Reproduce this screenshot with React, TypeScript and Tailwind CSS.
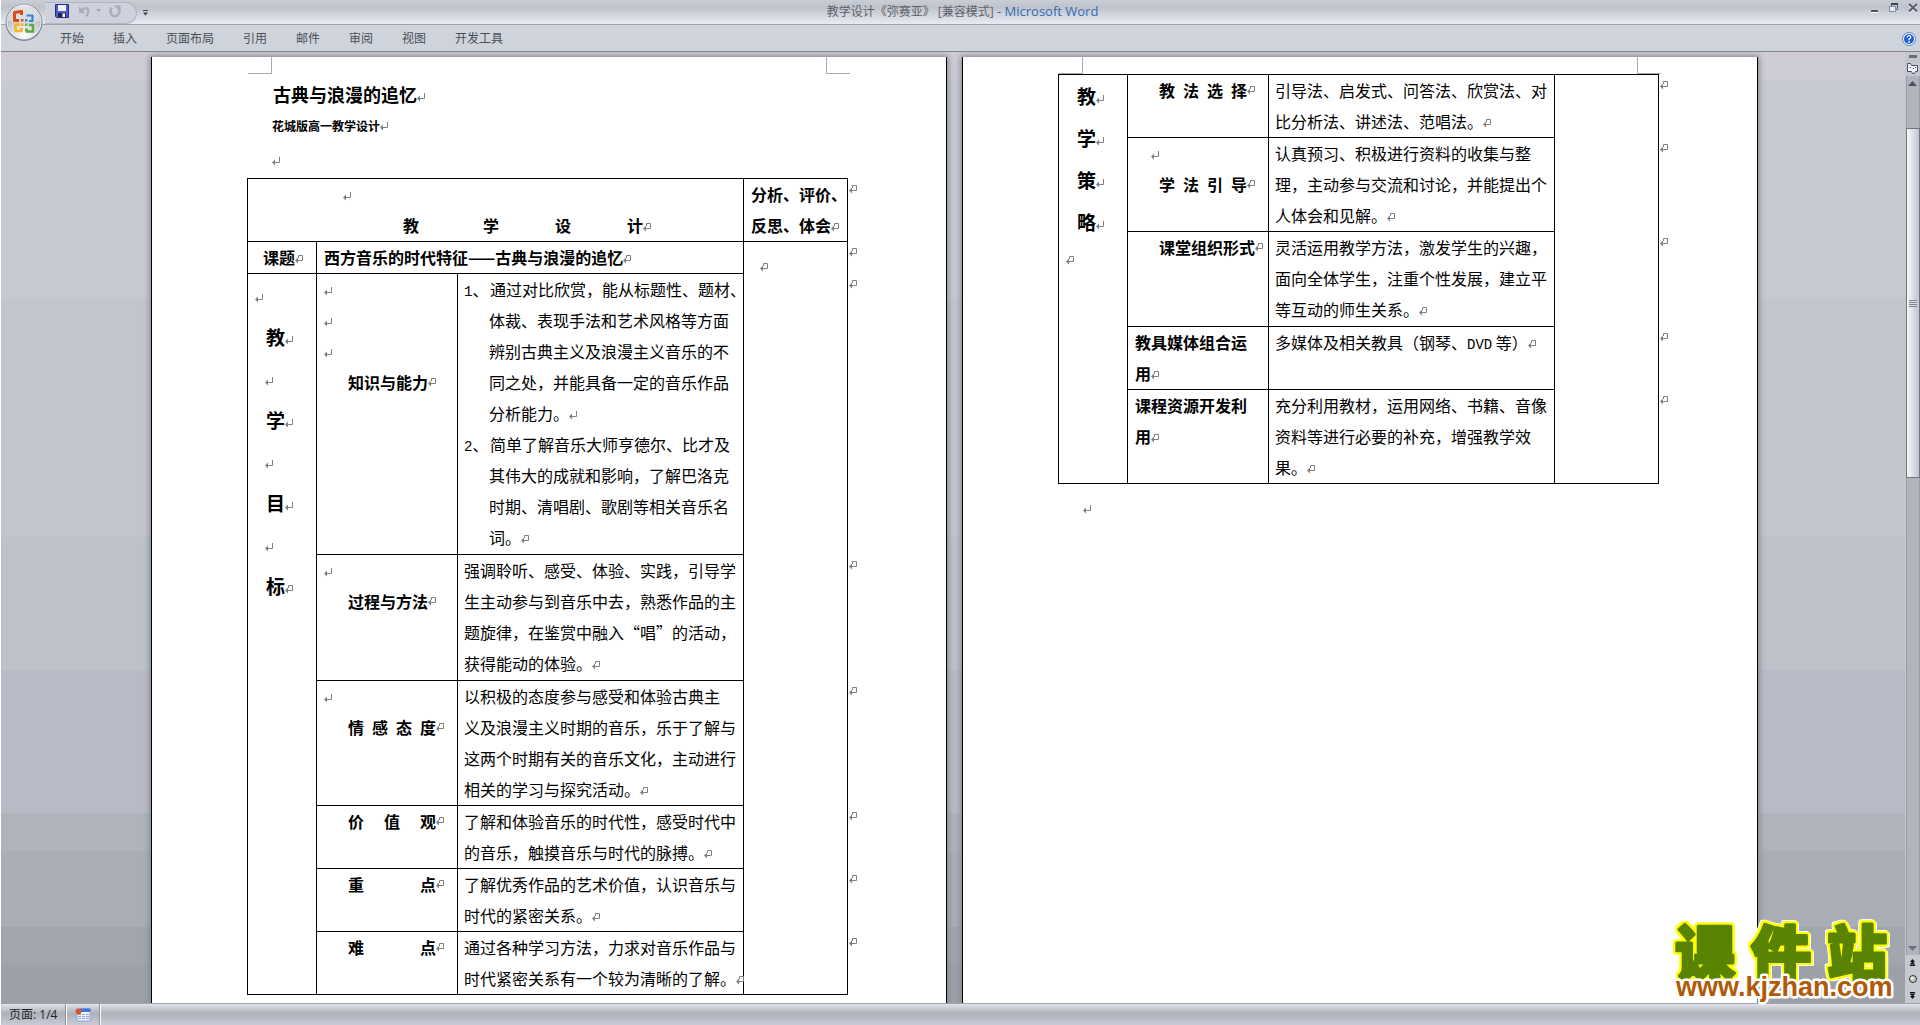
import type { ReactNode } from "react"

const tabs = ["开始", "插入", "页面布局", "引用", "邮件", "审阅", "视图", "开发工具"]

const goals = [
  {
    marks: 3,
    label: ["知识与能力"],
    height: "h-[281px]",
    lines: [
      "1、通过对比欣赏，能从标题性、题材、",
      "体裁、表现手法和艺术风格等方面",
      "辨别古典主义及浪漫主义音乐的不",
      "同之处，并能具备一定的音乐作品",
      "分析能力。",
      "2、简单了解音乐大师亨德尔、比才及",
      "其伟大的成就和影响，了解巴洛克",
      "时期、清唱剧、歌剧等相关音乐名",
      "词。",
    ],
  },
  {
    marks: 1,
    label: ["过程与方法"],
    height: "h-[126px]",
    lines: [
      "强调聆听、感受、体验、实践，引导学",
      "生主动参与到音乐中去，熟悉作品的主",
      "题旋律，在鉴赏中融入“唱”的活动，",
      "获得能动的体验。",
    ],
  },
  {
    marks: 1,
    label: ["情", "感", "态", "度"],
    height: "h-[125px]",
    lines: [
      "以积极的态度参与感受和体验古典主",
      "义及浪漫主义时期的音乐，乐于了解与",
      "这两个时期有关的音乐文化，主动进行",
      "相关的学习与探究活动。",
    ],
  },
  {
    marks: 0,
    label: ["价", "值", "观"],
    height: "h-[63px]",
    lines: ["了解和体验音乐的时代性，感受时代中", "的音乐，触摸音乐与时代的脉搏。"],
  },
  {
    marks: 0,
    label: ["重", "点"],
    height: "h-[63px]",
    lines: ["了解优秀作品的艺术价值，认识音乐与", "时代的紧密关系。"],
  },
  {
    marks: 0,
    label: ["难", "点"],
    height: "h-[63px]",
    lines: ["通过各种学习方法，力求对音乐作品与", "时代紧密关系有一个较为清晰的了解。"],
  },
]

const strategies = [
  {
    marks: 0,
    label: ["教", "法", "选", "择"],
    height: "h-[63px]",
    lines: ["引导法、启发式、问答法、欣赏法、对", "比分析法、讲述法、范唱法。"],
  },
  {
    marks: 1,
    indent: true,
    label: ["学", "法", "引", "导"],
    height: "h-[94px]",
    lines: ["认真预习、积极进行资料的收集与整", "理，主动参与交流和讨论，并能提出个", "人体会和见解。"],
  },
  {
    marks: 0,
    label: ["课堂组织形式"],
    height: "h-[95px]",
    lines: ["灵活运用教学方法，激发学生的兴趣，", "面向全体学生，注重个性发展，建立平", "等互动的师生关系。"],
  },
  {
    marks: 0,
    wrapped: ["教具媒体组合运", "用"],
    height: "h-[63px]",
    lines: ["多媒体及相关教具（钢琴、DVD 等）"],
  },
  {
    marks: 0,
    wrapped: ["课程资源开发利", "用"],
    height: "h-[94px]",
    lines: ["充分利用教材，运用网络、书籍、音像", "资料等进行必要的补充，增强教学效", "果。"],
  },
]

/* Paragraph mark; the cell variant has a small hook at the top */
function Mark({ cell = false }: { cell?: boolean }) {
  return (
    <svg
      className="inline-block h-[9px] w-2 shrink-0 align-baseline"
      viewBox="0 0 8 9"
      fill="none"
      stroke="#808080"
      aria-hidden="true"
    >
      <path d={cell ? "M3.5 3V0.5H7.5V5.5H2" : "M7.5 0V5.5H2"} />
      <path d="M0 5.500L3 2.500V8.500Z" fill="#808080" stroke="none" />
    </svg>
  )
}

function Lines({ lines }: { lines: string[] }) {
  const numbered = lines[0].startsWith("1、")
  return (
    <>
      {lines.map((line, index) => {
        const isItem = /^\d、/.test(line)
        return (
          <div key={index} className={numbered && !isItem ? "pl-[25px]" : ""}>
            {isItem ? (
              <span className="flex">
                <span className="w-[26px] shrink-0">
                  <span className="font-['Liberation_Mono',monospace] text-sm">{line[0]}</span>、
                </span>
                {line.slice(2)}
              </span>
            ) : line.includes("DVD") ? (
              <>
                多媒体及相关教具（钢琴、
                <span className="font-['Liberation_Mono',monospace] text-sm">DVD</span> 等）
              </>
            ) : (
              line
            )}
            {index === lines.length - 1 ? <Mark cell /> : line.endsWith("分析能力。") && <Mark />}
          </div>
        )
      })}
    </>
  )
}

type Row = { marks: number; indent?: boolean; label?: string[]; wrapped?: string[] }

function LabelCell({ row }: { row: Row }) {
  return (
    <th scope="row" className="border border-black px-[7px] text-left align-top font-bold">
      {Array.from({ length: row.marks }, (_, i) => (
        <div key={i} className={row.indent ? "pl-4" : ""}>
          <Mark />
        </div>
      ))}
      {row.wrapped && (
        <>
          <div>{row.wrapped[0]}</div>
          <div>
            {row.wrapped[1]}
            <Mark cell />
          </div>
        </>
      )}
      {row.label && (
        <div className="flex items-center pl-6">
          {row.label.length > 1 ? (
            <span className="flex w-[88px] shrink-0 justify-between">
              {row.label.map((char) => (
                <span key={char}>{char}</span>
              ))}
            </span>
          ) : (
            row.label[0]
          )}
          <Mark cell />
        </div>
      )}
    </th>
  )
}

function RowEnd() {
  return (
    <td className="align-top leading-4">
      <span className="pl-px">
        <Mark cell />
      </span>
    </td>
  )
}

function PlanTable({ children }: { children: ReactNode }) {
  return (
    <table className="ml-[95px] w-[614px] table-fixed border-collapse whitespace-nowrap">
      <colgroup>
        <col className="w-[69px]" />
        <col className="w-[141px]" />
        <col className="w-[286px]" />
        <col className="w-[104px]" />
        <col className="w-[14px]" />
      </colgroup>
      <tbody>{children}</tbody>
    </table>
  )
}

function Page({ children }: { children: ReactNode }) {
  return (
    <article className="w-[796px] shrink-0 border-x border-black bg-white font-['Noto_Sans_CJK_SC',sans-serif] text-base leading-[31px] text-black shadow-[0_0_6px_1px_#7d818c]">
      <div className="ml-24 flex w-[602px] justify-between">
        <div className="h-[17px] w-6 border-r border-b border-[#a9a9b3]" />
        <div className="h-[17px] w-6 border-b border-l border-[#a9a9b3]" />
      </div>
      {children}
    </article>
  )
}

function OfficeButton() {
  return (
    <button aria-label="Office 按钮" className="absolute top-[3px] left-1 z-10">
      <svg width="38" height="38" viewBox="0 0 38 38" fill="none">
        <defs>
          <radialGradient id="orb" cx="0.5" cy="0.9" r="0.8">
            <stop offset="0" stopColor="#ffffff" />
            <stop offset="0.5" stopColor="#d5d8df" />
            <stop offset="1" stopColor="#a4a8b2" />
          </radialGradient>
          <linearGradient id="orbTop" x1="0" y1="0" x2="0" y2="1">
            <stop offset="0" stopColor="#ffffff" />
            <stop offset="1" stopColor="#d9dce3" />
          </linearGradient>
        </defs>
        <circle cx="19" cy="19.5" r="18.5" fill="#80858f" />
        <circle cx="19" cy="19" r="17" fill="url(#orb)" stroke="#f3f4f7" />
        <path d="M3 18a16 16 0 0 1 32 0q-16 4-32 0Z" fill="url(#orbTop)" opacity="0.7" />
        <path d="M14 17.5H9.5V9.5L16.5 8.500V12" stroke="#dd4a16" strokeWidth="3" strokeLinejoin="round" />
        <path d="M21.500 12.500H27.500V18H24" stroke="#3487d2" strokeWidth="2.200" strokeLinejoin="round" />
        <path d="M15 21.500H10.500V28H16.500V25" stroke="#f6b51c" strokeWidth="2.600" strokeLinejoin="round" />
        <path d="M24 22H28V28.500H21.500V25.500" stroke="#62a83a" strokeWidth="2.600" strokeLinejoin="round" />
        <path d="M16 16h2.500v2.500H16z" fill="#e3561d" />
        <path d="M20 16h2.500v2.500H20z" fill="#3b8bd6" />
        <path d="M16 20.500h2.500V23H16z" fill="#f6b51c" />
        <path d="M20 20.500h2.500V23H20z" fill="#6eb545" />
      </svg>
    </button>
  )
}

function QuickAccess() {
  return (
    <div className="absolute top-0.5 left-11 flex h-[22px] items-center">
      <div className="flex h-full w-[92px] items-center rounded-r-full border border-l-0 border-[#b2b6c1] bg-[#cfd2dc] pb-1 pl-2.5">
        <button aria-label="保存">
          <svg width="14" height="14" viewBox="0 0 14 14">
            <path d="M0.500 0.500H13.500V13.500H1.500L0.500 12.500Z" fill="#4f59cc" stroke="#272d86" />
            <path d="M3 1H11V7H3Z" fill="#eef1fb" />
            <path d="M3 9H11V13H3Z" fill="#23264f" />
            <path d="M7.500 9.500H10V13H7.500Z" fill="#ffffff" />
          </svg>
        </button>
        <button aria-label="撤消" className="ml-2.5">
          <svg width="11" height="13" viewBox="0 0 12 13" fill="none">
            <path d="M2.500 6Q6 1.500 9 3.500T8 12" stroke="#a9adb9" strokeWidth="2.400" />
            <path d="M0 1V8H7Z" fill="#a9adb9" />
          </svg>
        </button>
        <button aria-label="撤消列表" className="ml-1.5">
          <svg width="5" height="4" viewBox="0 0 5 4">
            <path d="M0 0H5L2.500 3Z" fill="#a2a6b2" />
          </svg>
        </button>
        <button aria-label="重复" className="ml-2">
          <svg width="12" height="13" viewBox="0 0 12 13" fill="none">
            <path d="M2.500 2.500Q0 7 3 10T9 9.500T9.500 4" stroke="#a9adb9" strokeWidth="2.400" />
            <path d="M5 0.500H11.500V7Z" fill="#a9adb9" />
          </svg>
        </button>
      </div>
      <button aria-label="自定义快速访问工具栏" className="ml-1.5">
        <svg width="5" height="6" viewBox="0 0 5 6">
          <path d="M0 0H5V1H0ZM0 2.500H5L2.500 5.500Z" fill="#3f4349" />
        </svg>
      </button>
    </div>
  )
}

function TitleBar() {
  return (
    <header className="relative shrink-0 font-['Open_Sans','Noto_Sans_CJK_SC',sans-serif] text-xs">
      <OfficeButton />
      <QuickAccess />
      <div className="flex h-[25px] items-center justify-center border-b border-[#9fa3ad] bg-linear-to-b from-[#c9cdd6] via-[#bfc3cc] via-30% to-[#e8ebf3] pl-1">
        <h1 className="whitespace-pre text-[#5c616b]">
          教学设计《弥赛亚》 [兼容模式]<span className="text-[13px] text-[#2f6caf]"> - Microsoft Word</span>
        </h1>
        <div className="absolute top-0.5 right-0.5 flex items-center gap-2.5 text-[#555a66]">
          <button aria-label="最小化">
            <svg width="9" height="11" viewBox="0 0 9 11">
              <path d="M1 8H8V10H1Z" fill="#4d525b" />
              <path d="M1 10H8V11H1Z" fill="#fff" />
            </svg>
          </button>
          <button aria-label="还原">
            <svg width="9" height="11" viewBox="0 0 9 11" fill="none">
              <path d="M2.500 5V2.500H8.500V7.500H7" stroke="#59637b" />
              <path d="M2 2H9" stroke="#40444c" strokeWidth="2" />
              <path d="M0.500 4.500H6.500V9.500H0.500Z" fill="#e6eaf2" stroke="#7d8ba8" />
            </svg>
          </button>
          <button aria-label="关闭">
            <svg width="10" height="11" viewBox="0 0 10 11" fill="none">
              <path d="M1 3L9 10.500M9 3L1 10.500" stroke="#fff" strokeWidth="2" />
              <path d="M1 2L9 9.500M9 2L1 9.500" stroke="#555c6c" strokeWidth="2" />
            </svg>
          </button>
        </div>
      </div>
      <nav className="flex h-[27px] items-center gap-[29px] border-b border-[#7f848a] bg-[#cfd3dc] pt-0.5 pr-1 pl-[59px] text-[#4a4f58]">
        {tabs.map((tab) => (
          <button key={tab}>{tab}</button>
        ))}
        <button aria-label="帮助" className="ml-auto">
          <svg width="14" height="14" viewBox="0 0 14 14" fill="none">
            <circle cx="7" cy="7" r="6.500" fill="#f4f8ff" stroke="#5d83c4" />
            <circle cx="7" cy="7" r="5" fill="#1f5fd0" />
            <path d="M5.200 5.500Q5.200 3.700 7 3.700T8.800 5.300Q8.800 6.300 7 7.200V8.300" stroke="#fff" strokeWidth="1.300" />
            <circle cx="7" cy="10" r="0.900" fill="#fff" />
          </svg>
        </button>
      </nav>
    </header>
  )
}

function ScrollBar() {
  return (
    <div className="flex w-[15px] shrink-0 flex-col items-center bg-[#c4c7d0]">
      <div className="mt-[3px] h-[3px] w-2 shrink-0 bg-[#6b6d74]" />
      <button aria-label="标尺" className="mt-1">
        <svg className="block" width="13" height="13" viewBox="0 0 13 13">
          <path
            d="M1.500 1.500H4.500L5.500 3.500H11.500V9.500H9.500L8.500 11.500H6.500L5.500 9.500H1.500Z"
            fill="#f4eef4"
            stroke="#3a5568"
          />
          <path d="M4 5h1v1H4zM7 6h1v1H7zM9 5h1v1H9z" fill="#3a5568" />
        </svg>
      </button>
      <div className="mt-px flex w-3.5 flex-1 flex-col items-center border-x border-[#999da7] bg-[#b1b4bd]">
        <button aria-label="向上滚动" className="mt-[5px]">
          <svg className="block" width="9" height="5" viewBox="0 0 9 5">
            <path d="M4.500 0L9 5H0Z" fill="#50545f" />
          </svg>
        </button>
        <div className="mt-[42px] flex h-[350px] w-3.5 shrink-0 items-center justify-center border border-[#72757d] bg-linear-to-r from-[#fbf8e6] via-[#e2e4ee] via-40% to-[#bfc4d1]">
          <div className="h-[7px] w-2 bg-[repeating-linear-gradient(#7d828a_0_1px,#dfe2e9_1px_2px)]" />
        </div>
        <button aria-label="向下滚动" className="mt-auto mb-1">
          <svg className="block" width="9" height="5" viewBox="0 0 9 5">
            <path d="M0 0H9L4.500 5Z" fill="#6b7180" />
          </svg>
        </button>
      </div>
      <div className="flex h-12 w-full shrink-0 flex-col items-center justify-around bg-[#c6c9d1]">
        <button aria-label="前一页">
          <svg className="block" width="7" height="7" viewBox="0 0 7 7">
            <path d="M3.500 0L6 3H1ZM3.500 2.500L6.500 5.500H0.500ZM1 6H6V7H1Z" fill="#111" />
          </svg>
        </button>
        <button aria-label="选择浏览对象">
          <svg className="block" width="8" height="8" viewBox="0 0 8 8">
            <circle cx="4" cy="4" r="3.500" fill="#c9c9c4" stroke="#2c2c2c" />
            <circle cx="3" cy="3" r="1.300" fill="#fff" />
          </svg>
        </button>
        <button aria-label="下一页">
          <svg className="block" width="7" height="7" viewBox="0 0 7 7">
            <path d="M3.500 7L6 4H1ZM3.500 4.500L6.500 1.500H0.500ZM1 0H6V1H1Z" fill="#111" />
          </svg>
        </button>
      </div>
    </div>
  )
}

function Watermark() {
  return (
    <svg
      className="absolute right-4 bottom-0 z-10 overflow-visible"
      width="236"
      height="90"
      viewBox="0 0 236 90"
      strokeLinejoin="round"
    >
      <text
        x="7 83 159"
        y="63"
        className="font-['Noto_Sans_CJK_SC',sans-serif] text-[60px] font-black [filter:drop-shadow(2px_0_0_#ff0)_drop-shadow(-2px_0_0_#ff0)_drop-shadow(0_2px_0_#ff0)_drop-shadow(0_-2px_0_#ff0)_drop-shadow(1px_1px_0_#fff)_drop-shadow(-1px_-1px_0_#fff)]"
        fill="#598300"
        stroke="#598300"
        strokeWidth="3"
      >
        课件站
      </text>
      <text
        x="8"
        y="83"
        className="font-['Liberation_Sans',sans-serif] text-[27px] font-bold [paint-order:stroke]"
        fill="#b05a08"
        stroke="#ffffff"
        strokeWidth="5"
      >
        www.kjzhan.com
      </text>
    </svg>
  )
}

function StatusBar() {
  return (
    <footer className="flex h-[22px] shrink-0 items-stretch border-t border-[#a0a3a9] bg-linear-to-b from-[#e0e3ea] via-[#adb1ba] via-45% to-[#c9ccd6] font-['Open_Sans','Noto_Sans_CJK_SC',sans-serif] text-xs text-[#22252b]">
      <button className="border-r border-[#8c9098] px-2">页面: 1/4</button>
      <button aria-label="录制宏" className="border-r border-l border-r-[#8c9098] border-l-white px-2">
        <svg width="16" height="14" viewBox="0 0 16 14">
          <path d="M2 1H15V13H2Z" fill="#f5f8ff" stroke="#93a5cf" />
          <path d="M5 0.500H15.500V4H5Z" fill="#3b74dd" />
          <path d="M3 6h3v1H3zM7 6h3v1H7zM11 6h3v1h-3zM3 8h3v1H3zM7 8h3v1H7zM11 8h3v1h-3zM3 10h3v1H3zM7 10h3v1H7zM11 10h3v1h-3z" fill="#8aa2d8" />
          <circle cx="3.500" cy="3.500" r="3" fill="#dd5430" />
        </svg>
      </button>
      <div className="border-l border-white" />
    </footer>
  )
}

export default function App() {
  return (
    <div className="flex h-screen flex-col overflow-hidden border-l border-white bg-[#cfd3dc]">
      <TitleBar />
      <main className="relative flex min-h-0 flex-1 bg-[linear-gradient(#cfccd7_0_3%,#c8cad3_3%_26%,#c3c5ce_26%_51%,#bdc1ca_51%_65%,#b8bbc5_65%_80%,#afb3bb_80%_84%,#a9adb6_84%_92%,#a1a5ae_92%_96%,#9ca1a8_96%)]">
        <div className="flex min-w-0 flex-1 justify-center gap-[15px] overflow-hidden pt-[5px] pl-[3px]">
          <Page>
            <h2 className="mt-[5px] ml-[121px] text-lg leading-[31px] font-bold">
              古典与浪漫的追忆
              <Mark />
            </h2>
            <p className="ml-[120px] text-xs leading-[31px] font-bold">
              花城版高一教学设计
              <Mark />
            </p>
            <p className="ml-[120px] leading-[37px]">
              <Mark />
            </p>
            <PlanTable>
              <tr className="h-[63px]">
                <th colSpan={3} className="border border-black text-left align-top font-bold">
                  <div className="pl-[95px]">
                    <Mark />
                  </div>
                  <div className="flex items-center gap-14 pl-[155px]">
                    <span className="mr-2">教</span>
                    <span>学</span>
                    <span>设</span>
                    <span>
                      计<Mark cell />
                    </span>
                  </div>
                </th>
                <th className="border border-black px-[7px] text-left align-top font-bold">
                  <div>分析、评价、</div>
                  <div>
                    反思、体会
                    <Mark cell />
                  </div>
                </th>
                <RowEnd />
              </tr>
              <tr className="h-8">
                <th className="border border-black pl-[15px] text-left align-top font-bold">
                  课题
                  <Mark cell />
                </th>
                <th colSpan={2} className="border border-black px-[7px] text-left align-top font-bold">
                  西方音乐的时代特征——古典与浪漫的追忆
                  <Mark cell />
                </th>
                <td rowSpan={7} className="border border-black pt-2 pl-4 align-top">
                  <Mark cell />
                </td>
                <RowEnd />
              </tr>
              {goals.map((row, index) => (
                <tr key={row.label.join("")} className={row.height}>
                  {index === 0 && (
                    <th rowSpan={6} className="border border-black text-left align-top text-[19px] font-bold">
                      {["教", "学", "目", "标"].map((char, i) => (
                        <div key={char}>
                          <div className={i === 0 ? "pl-[7px] leading-[42px]" : "pl-[17px] leading-[42px]"}>
                            <Mark />
                          </div>
                          <div className="pl-[18px] leading-[41px]">
                            {char}
                            <Mark cell={i === 3} />
                          </div>
                        </div>
                      ))}
                    </th>
                  )}
                  <LabelCell row={row} />
                  <td className="border border-black pl-[6px] align-top">
                    <Lines lines={row.lines} />
                  </td>
                  <RowEnd />
                </tr>
              ))}
            </PlanTable>
          </Page>
          <Page>
            <PlanTable>
              {strategies.map((row, index) => (
                <tr key={row.lines[0]} className={row.height}>
                  {index === 0 && (
                    <th rowSpan={5} className="border border-black text-left align-top font-bold">
                      {["教", "学", "策", "略"].map((char) => (
                        <div key={char} className="pl-[18px] text-[19px] leading-[42px]">
                          {char}
                          <Mark />
                        </div>
                      ))}
                      <div className="pl-[7px]">
                        <Mark cell />
                      </div>
                    </th>
                  )}
                  <LabelCell row={row} />
                  <td className="border border-black pl-[6px] align-top">
                    <Lines lines={row.lines} />
                  </td>
                  {index === 0 && <td rowSpan={5} className="border border-black" />}
                  <RowEnd />
                </tr>
              ))}
            </PlanTable>
            <p className="mt-2 ml-[120px]">
              <Mark />
            </p>
          </Page>
        </div>
        <ScrollBar />
        <Watermark />
      </main>
      <StatusBar />
    </div>
  )
}
